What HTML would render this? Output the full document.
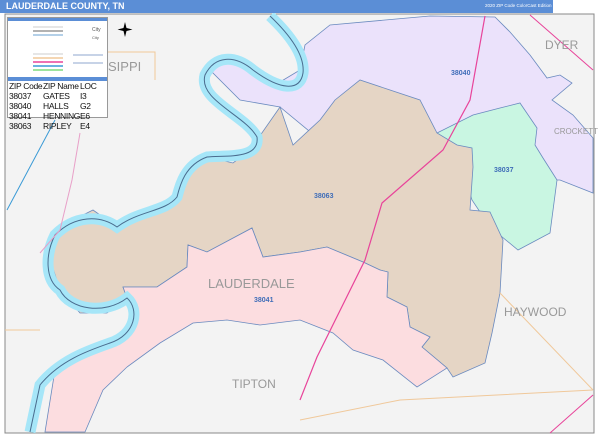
<!DOCTYPE html>
<html><head><style>
body{margin:0;width:600px;height:435px;overflow:hidden;background:#fff;font-family:"Liberation Sans",sans-serif}
.hdr{position:absolute;left:0;top:0;width:600px;height:13px;background:#5b8ed6}
.hdr b{position:absolute;left:6px;top:1px;color:#fff;font-size:9px}
.hdr i{position:absolute;left:485px;top:3px;color:#fff;font-size:4.5px;font-style:normal}
.logo{position:absolute;left:553px;top:0;width:47px;height:13px;background:#fff}
.leg{position:absolute;left:7px;top:17px;width:99px;height:99px;background:#fff;border:1px solid #999}
.lbl{position:absolute;color:#999;font-size:11px;white-space:nowrap}
.z{position:absolute;color:#3f6db8;font-size:7px;font-weight:bold}
.t{position:absolute;font-size:8.5px;line-height:10px;color:#111;white-space:nowrap;letter-spacing:-0.3px}
</style></head><body>
<svg width="600" height="435" style="position:absolute;left:0;top:0">
<rect x="5" y="14" width="589" height="419" fill="#f3f3f3" stroke="#888"/>
<polygon points="210,70 225,60 245,65 275,85 300,70 305,45 330,25 430,16 495,17 510,32 530,55 547,78 560,75 572,83 552,100 573,115 593,138 593,193 560,180 520,180 480,180 440,150 320,140 280,107 240,100" fill="#ebe2fb" stroke="#6a8abf" stroke-width=".8"/>
<polygon points="437,133 473,115 500,108 520,103 537,128 535,145 543,158 557,180 550,233 518,250 490,227 472,200 460,162" fill="#c9f6e2" stroke="#6a8abf" stroke-width=".8"/>
<polygon points="48,253 50,237 67,223 93,210 117,227 133,213 160,210 177,197 180,180 187,167 207,157 233,163 250,150 280,107 293,145 320,120 335,100 360,80 390,90 420,100 437,133 457,145 472,148 473,167 470,210 490,212 503,240 500,293 492,333 485,363 453,377 447,368 422,347 430,337 410,327 407,307 387,297 388,272 380,270 363,262 327,247 300,252 263,257 252,228 207,252 188,245 187,267 157,287 123,287 127,298 107,313 80,313 60,290" fill="#e5d5c5" stroke="#6a8abf" stroke-width=".8"/>
<polygon points="123,287 157,287 187,267 188,245 207,252 252,228 263,257 300,252 327,247 363,262 380,270 388,272 387,297 407,307 410,327 430,337 422,347 447,368 417,387 383,360 353,350 333,333 300,320 260,325 227,320 193,323 160,343 127,367 103,390 85,432 45,432 55,370 87,352 110,343 133,330 135,307 127,298" fill="#fcdde0" stroke="#6a8abf" stroke-width=".8"/>
<path d="M270,16 C290,35 305,55 303,73 C300,92 280,90 253,70 C235,55 215,55 205,75 C198,100 245,115 257,137 C260,160 225,155 207,157 C185,165 180,185 177,197 C165,212 140,210 117,227 C100,215 75,215 55,235 C45,255 45,280 60,290 C70,310 105,315 127,298 C140,310 135,335 110,343 C90,350 60,360 40,385 L30,432" fill="none" stroke="#a6e6f8" stroke-width="11"/>
<path d="M270,16 C290,35 305,55 303,73 C300,92 280,90 253,70 C235,55 215,55 205,75 C198,100 245,115 257,137 C260,160 225,155 207,157 C185,165 180,185 177,197 C165,212 140,210 117,227 C100,215 75,215 55,235 C45,255 45,280 60,290 C70,310 105,315 127,298 C140,310 135,335 110,343 C90,350 60,360 40,385 L30,432" fill="none" stroke="#4a6c8e" stroke-width="1"/>
<path d="M300,400 L317,357 L365,260 L382,203 L443,150 L470,100 L485,16" stroke="#e8449a" stroke-width="1.2" fill="none"/>
<path d="M530,15 L593,70 M550,433 L593,395" stroke="#e8449a" stroke-width="1" fill="none"/>
<path d="M55,120 L7,210" stroke="#3a9ad6" stroke-width="1" fill="none"/>
<path d="M80,133 L72,180 L60,230 L40,253" stroke="#e8a0c8" stroke-width="1" fill="none"/>
<path d="M105,52 L155,52 L155,80 M5,330 L40,330 M300,420 L400,400 L593,390 M500,293 L593,390" stroke="#f0c89a" stroke-width="1" fill="none"/>
<path d="M125,22 l1.5,6 l6,1.5 l-6,1.5 l-1.5,6 l-1.5,-6 l-6,-1.5 l6,-1.5z" fill="#000"/>
</svg>
<div class="hdr"><b>LAUDERDALE COUNTY, TN</b><i>2020 ZIP Code ColorCast Edition</i></div>
<div class="logo"></div>
<div class="leg">
<div style="position:absolute;left:0;top:0;width:99px;height:3px;background:#5b8ed6"></div>
<svg width="99" height="60" style="position:absolute;left:0;top:3px">
<g stroke-width="1.5">
<line x1="25" y1="6" x2="55" y2="6" stroke="#ddd"/><line x1="25" y1="10" x2="55" y2="10" stroke="#999"/>
<line x1="25" y1="14" x2="55" y2="14" stroke="#9bc0e0"/><line x1="25" y1="33" x2="55" y2="33" stroke="#ddd"/>
<line x1="25" y1="37" x2="55" y2="37" stroke="#f0c89a"/><line x1="25" y1="41" x2="55" y2="41" stroke="#e8449a"/>
<line x1="25" y1="45" x2="55" y2="45" stroke="#3a9ad6"/><line x1="25" y1="49" x2="55" y2="49" stroke="#7ddc7d"/>
<line x1="65" y1="34" x2="95" y2="34" stroke="#6a8abf" stroke-width=".8"/><line x1="65" y1="42" x2="95" y2="42" stroke="#6a8abf" stroke-width=".8"/>
</g>
<text x="84" y="10" font-size="5" fill="#555">City</text><text x="84" y="18" font-size="4" fill="#555">City</text>
</svg>
<div style="position:absolute;left:0;top:59px;width:99px;height:4px;background:#5b8ed6"></div>
<div class="t" style="left:1px;top:63px">ZIP Code<br>38037<br>38040<br>38041<br>38063</div>
<div class="t" style="left:35px;top:63px">ZIP Name<br>GATES<br>HALLS<br>HENNING<br>RIPLEY</div>
<div class="t" style="left:72px;top:63px">LOC<br>I3<br>G2<br>E6<br>E4</div>
</div>
<div class="lbl" style="left:108px;top:59px;font-size:13px">SIPPI</div>
<div class="lbl" style="left:61px;top:108px;font-size:14px;color:#888;z-index:-1">Arkansas</div>
<div class="lbl" style="left:545px;top:38px;font-size:12px">DYER</div>
<div class="lbl" style="left:554px;top:127px;font-size:8px">CROCKETT</div>
<div class="lbl" style="left:504px;top:305px;font-size:12px">HAYWOOD</div>
<div class="lbl" style="left:232px;top:377px;font-size:12px">TIPTON</div>
<div class="lbl" style="left:208px;top:276px;font-size:13px">LAUDERDALE</div>
<div class="z" style="left:451px;top:70px">38040</div>
<div class="z" style="left:494px;top:167px">38037</div>
<div class="z" style="left:314px;top:193px">38063</div>
<div class="z" style="left:254px;top:297px">38041</div>
</body></html>
